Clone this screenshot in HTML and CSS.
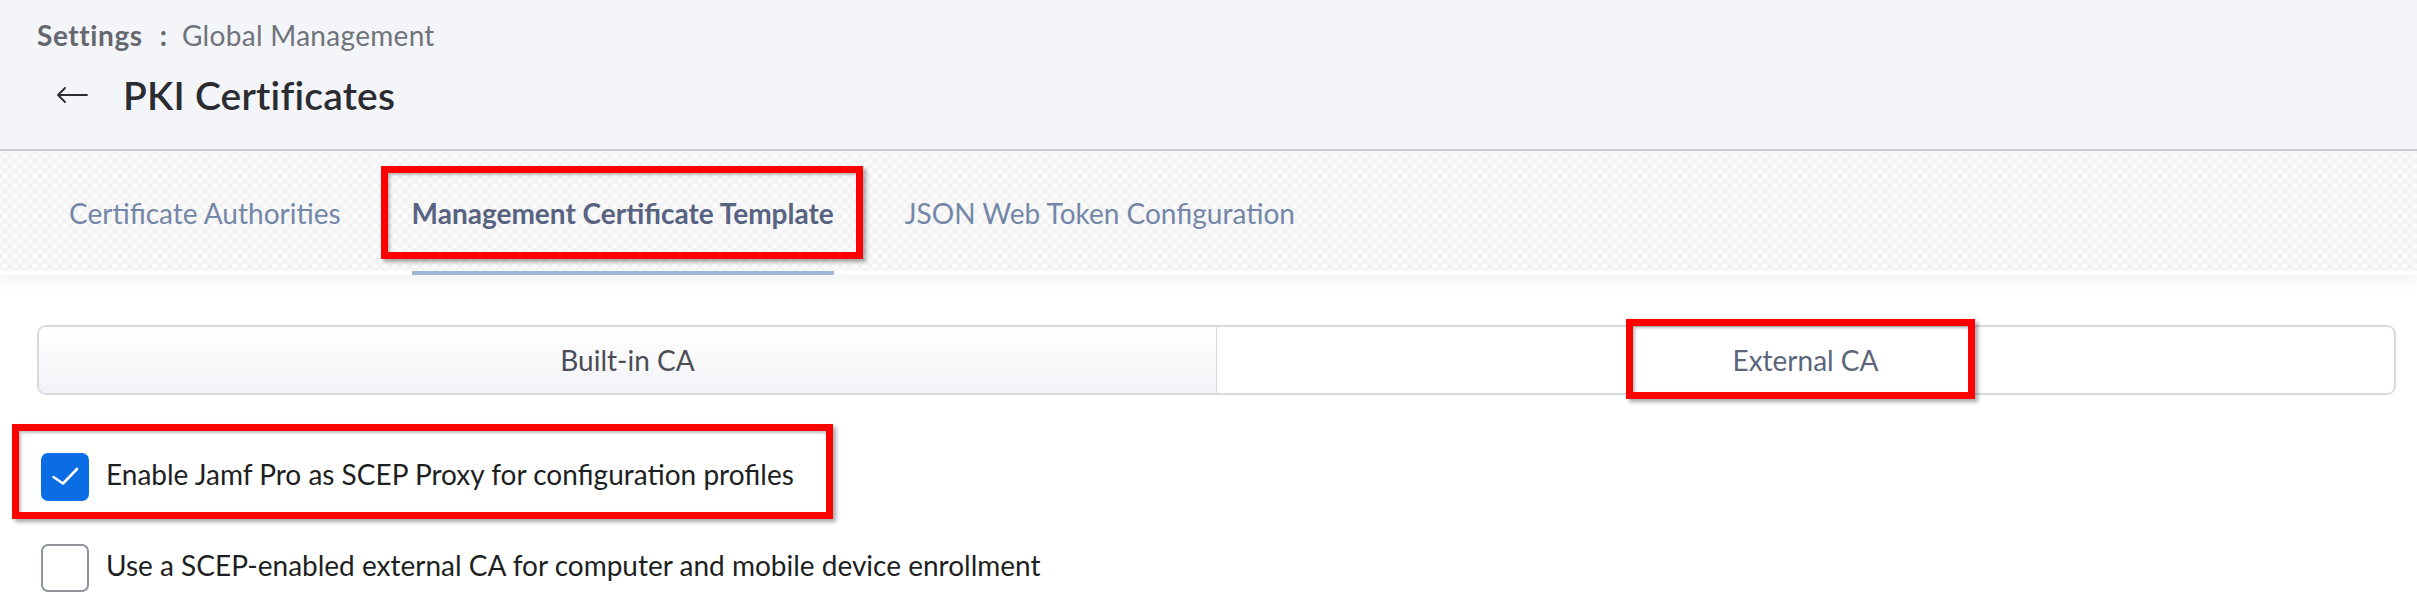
FILE: index.html
```html
<!DOCTYPE html>
<html lang="en">
<head>
<meta charset="utf-8">
<title>PKI Certificates</title>
<link rel="stylesheet" href="styles.css">
</head>
<body>
<div class="page">
  <header class="page-header">
    <div class="breadcrumb">
      <span class="crumb-root">Settings</span>
      <span class="crumb-sep">:</span>
      <span class="crumb-leaf">Global Management</span>
    </div>
    <div class="title-row">
      <svg class="back-arrow" width="32" height="16" viewBox="0 0 32 16" aria-hidden="true">
        <path d="M31 8H2M9 1L2 8l7 7" fill="none" stroke="#2b2d33" stroke-width="1.8" stroke-linecap="round" stroke-linejoin="round"/>
      </svg>
      <h1 class="title">PKI Certificates</h1>
    </div>
  </header>

  <nav class="tabs">
    <a class="tab">Certificate Authorities</a>
    <a class="tab tab-active">Management Certificate Template</a>
    <a class="tab">JSON Web Token Configuration</a>
  </nav>

  <main class="content">
    <div class="segmented">
      <div class="segment">Built-in CA</div>
      <div class="segment segment-active">External CA</div>
    </div>

    <div class="options">
      <label class="check-row">
        <span class="checkbox checkbox-on">
          <svg width="48" height="48" viewBox="0 0 48 48" aria-hidden="true">
            <path d="M12.5 24l9.5 6.5L36 16" fill="none" stroke="#fff" stroke-width="2.6" stroke-linecap="round" stroke-linejoin="round"/>
          </svg>
        </span>
        <span class="check-label">Enable Jamf Pro as SCEP Proxy for configuration profiles</span>
      </label>
      <label class="check-row">
        <span class="checkbox"></span>
        <span class="check-label">Use a SCEP-enabled external CA for computer and mobile device enrollment</span>
      </label>
    </div>
  </main>

  <div class="annot annot-tab"></div>
  <div class="annot annot-ext"></div>
  <div class="annot annot-check"></div>
</div>
</body>
</html>
```

FILE: styles.css
```css
* { box-sizing: border-box; }

html, body {
  margin: 0;
  padding: 0;
  background: #ffffff;
}

body {
  font-family: "Lato", "Liberation Sans", sans-serif;
  color: #222326;
}

.page {
  position: relative;
  width: 2417px;
  height: 614px;
  overflow: hidden;
}

/* Header */
.page-header {
  background: #f4f5f9;
  height: 151px;
  border-bottom: 2px solid #c9cdd6;
  padding: 18px 0 0 37px;
}

.breadcrumb {
  display: flex;
  align-items: baseline;
  font-size: 28px;
  line-height: 34px;
  color: #6b6e76;
}

.crumb-root {
  font-weight: 700;
  color: #65686f;
  letter-spacing: 0.6px;
}

.crumb-sep {
  font-weight: 700;
  margin: 0 15px 0 17px;
  color: #65686f;
}

.crumb-leaf {
  font-weight: 400;
  color: #70737b;
  letter-spacing: 0.3px;
}

.title-row {
  display: flex;
  align-items: center;
  height: 46px;
  margin-top: 20px;
  padding-left: 19px;
}

.back-arrow {
  display: block;
  flex: none;
}

.title {
  margin: 0 0 0 35px;
  font-size: 39px;
  line-height: 46px;
  font-weight: 600;
  color: #2a2c31;
  letter-spacing: 0.2px;
}

/* Tabs */
.tabs {
  display: flex;
  gap: 71px;
  height: 124px;
  padding-left: 69px;
  background-color: #f2f2f3;
  background-image:
    radial-gradient(circle at 50% 50%, #fbfbfb 0, #fbfbfb 2.4px, transparent 3.4px),
    radial-gradient(circle at 50% 50%, #fafafa 0, #fafafa 2.4px, transparent 3.4px);
  background-size: 10px 10px, 10px 10px;
  background-position: 0 0, 5px 5px;
  border-bottom: 4px solid #ffffff;
  box-shadow: 0 6px 14px rgba(40, 50, 70, 0.06);
  position: relative;
}

.tab {
  display: flex;
  align-items: center;
  height: 124px;
  margin-bottom: -4px;
  padding-top: 4px;
  border-bottom: 4px solid transparent;
  font-size: 28px;
  font-weight: 400;
  color: #7487a8;
  white-space: nowrap;
}

.tab-active {
  font-weight: 700;
  color: #576381;
  border-bottom-color: #9fb7d6;
}

/* Content */
.content {
  padding: 50px 21px 0 37px;
}

.segmented {
  display: flex;
  height: 70px;
  border: 2px solid #d6d9df;
  border-radius: 9px;
  overflow: hidden;
}

.segment {
  flex: 1 1 0;
  display: flex;
  align-items: center;
  justify-content: center;
  font-size: 28px;
  color: #4b4e56;
  background: linear-gradient(#ffffff, #f2f3f7);
}

.segment + .segment {
  border-left: 1px solid #d6d9df;
}

.segment-active {
  background: #ffffff;
  color: #5b6579;
}

.options {
  display: flex;
  flex-direction: column;
  gap: 43px;
  margin-top: 58px;
  padding-left: 4px;
}

.check-row {
  display: flex;
  align-items: center;
  gap: 17px;
}

.checkbox {
  flex: none;
  width: 48px;
  height: 48px;
  border: 2px solid #8f939b;
  border-radius: 7px;
  background: #ffffff;
  display: block;
}

.checkbox svg { display: block; margin: -2px; }

.checkbox-on {
  background: #0a6de6;
  border-color: #0a6de6;
}

.check-label {
  font-size: 28px;
  line-height: 34px;
  padding-bottom: 6px;
  color: #1e1f22;
}

/* Annotation overlays */
.annot {
  position: absolute;
  border: 7px solid #ff0000;
  box-shadow: 3px 3px 4px rgba(0, 0, 0, 0.35), inset 2px 2px 3px rgba(0, 0, 0, 0.25);
  pointer-events: none;
}

.annot-tab {
  left: 381px;
  top: 166px;
  width: 482px;
  height: 93px;
}

.annot-ext {
  left: 1626px;
  top: 319px;
  width: 349px;
  height: 80px;
}

.annot-check {
  left: 12px;
  top: 424px;
  width: 821px;
  height: 95px;
}
```
